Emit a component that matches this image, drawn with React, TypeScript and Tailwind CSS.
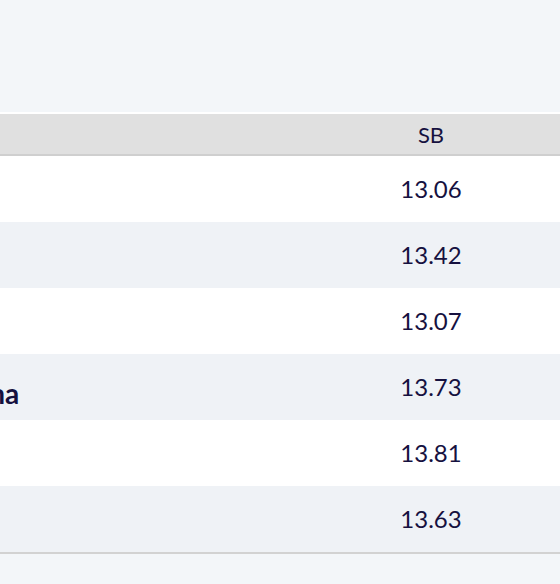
import { useLayoutEffect, useRef } from 'react';

type Row = { rank: number; name: string; sb: string };

const rows: Row[] = [
  { rank: 1, name: 'Tobi Amusan', sb: '13.06' },
  { rank: 2, name: 'Nadine Visser', sb: '13.42' },
  { rank: 3, name: 'Megan Tapper', sb: '13.07' },
  { rank: 4, name: 'Hanna Plotitsyna', sb: '13.73' },
  { rank: 5, name: 'Luca Kozák', sb: '13.81' },
  { rank: 6, name: 'Sarah Lavin', sb: '13.63' },
];

export default function App() {
  const scroller = useRef<HTMLDivElement>(null);

  // table is scrolled sideways so the SB column sits in view
  useLayoutEffect(() => {
    if (scroller.current) scroller.current.scrollLeft = 274;
  }, []);

  return (
    <div className="min-h-[584px] bg-[#f3f6f9] text-[#16113f]" style={{ fontFamily: 'Lato, "Noto Sans", sans-serif' }}>
      <div className="h-[112px]" />
      <div ref={scroller} className="overflow-hidden bg-white pt-[2px]">
        <div className="w-[1000px]">
          <div className="flex h-[42px] items-center border-b-2 border-[#cfcfcf] bg-[#e0e0e0] text-[22px]">
            <div className="w-16 shrink-0 px-4">#</div>
            <div className="w-[571px] shrink-0 px-4">Athlete</div>
            <div className="w-[140px] shrink-0 text-center">SB</div>
            <div className="flex-1" />
          </div>
          <div className="border-b-2 border-[#d2d2d2]">
            {rows.map((r, i) => (
              <div
                key={r.rank}
                className={`flex h-[66px] items-center text-[24px] ${i % 2 === 1 ? 'bg-[#eff2f6]' : 'bg-white'}`}
              >
                <div className="w-16 shrink-0 px-4">{r.rank}</div>
                <div className="w-[571px] shrink-0 whitespace-nowrap px-4 pt-3 text-[28px] font-bold leading-8">{r.name}</div>
                <div className="w-[140px] shrink-0 text-center">{r.sb}</div>
                <div className="flex-1" />
              </div>
            ))}
          </div>
        </div>
      </div>
    </div>
  );
}
